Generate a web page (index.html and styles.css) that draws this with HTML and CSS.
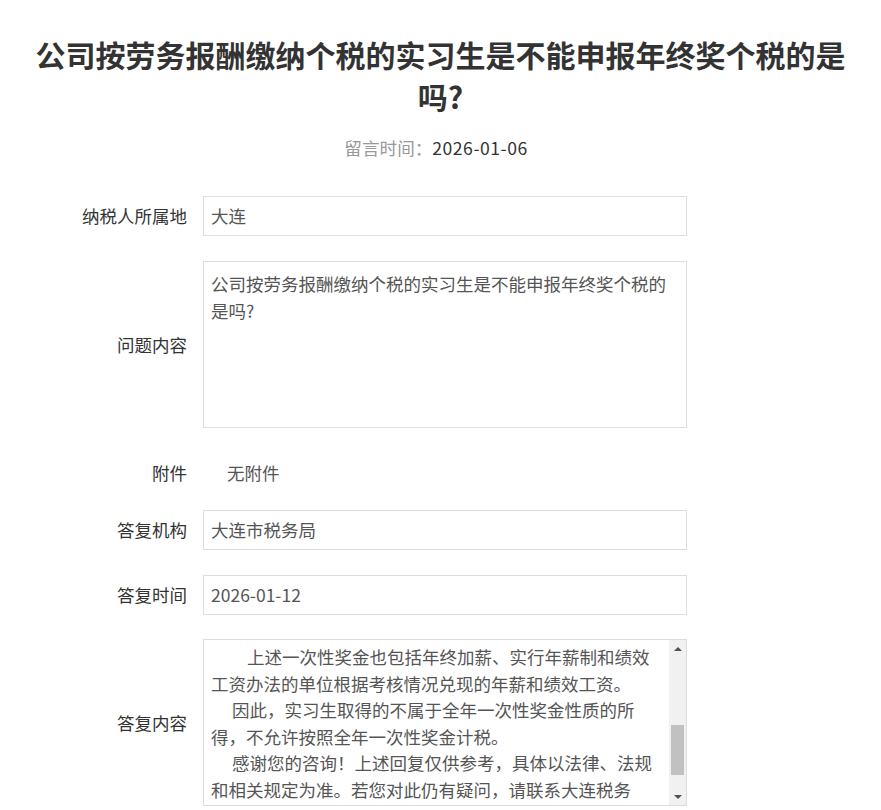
FILE: index.html
```html
<!DOCTYPE html>
<html lang="zh-CN">
<head>
<meta charset="utf-8">
<title>留言详情</title>
<link rel="stylesheet" href="styles.css">
</head>
<body>
<div class="page">
  <h1 class="title">公司按劳务报酬缴纳个税的实习生是不能申报年终奖个税的是吗?</h1>
  <div class="meta"><span class="meta-label">留言时间：</span><span class="meta-value">2026-01-06</span></div>

  <div class="form">
    <div class="row row-gap">
      <div class="label">纳税人所属地</div>
      <div class="field">大连</div>
    </div>
    <div class="row row-gap">
      <div class="label label-mid">问题内容</div>
      <div class="area">公司按劳务报酬缴纳个税的实习生是不能申报年终奖个税的是吗?</div>
    </div>
    <div class="row row-attach">
      <div class="label">附件</div>
      <div class="plain">无附件</div>
    </div>
    <div class="row row-gap">
      <div class="label">答复机构</div>
      <div class="field">大连市税务局</div>
    </div>
    <div class="row row-gap2">
      <div class="label">答复时间</div>
      <div class="field">2026-01-12</div>
    </div>
    <div class="row">
      <div class="label label-mid">答复内容</div>
      <div class="scrollbox">
        <div class="scroll-content">
          <p class="line indent2">上述一次性奖金也包括年终加薪、实行年薪制和绩效</p>
          <p class="line">工资办法的单位根据考核情况兑现的年薪和绩效工资。</p>
          <p class="line indent1">因此，实习生取得的不属于全年一次性奖金性质的所</p>
          <p class="line">得，不允许按照全年一次性奖金计税。</p>
          <p class="line indent1">感谢您的咨询！上述回复仅供参考，具体以法律、法规</p>
          <p class="line">和相关规定为准。若您对此仍有疑问，请联系大连税务</p>
        </div>
        <div class="scrollbar">
          <div class="arrow arrow-up"></div>
          <div class="track"><div class="thumb"></div></div>
          <div class="arrow arrow-down"></div>
        </div>
      </div>
    </div>
  </div>
</div>
</body>
</html>
```

FILE: styles.css
```css
html, body {
  margin: 0;
  padding: 0;
  background: #ffffff;
}
body {
  font-family: "Noto Sans CJK SC", "Noto Sans", "Liberation Sans", sans-serif;
  color: #333333;
}
.page {
  width: 881px;
}
.title {
  margin: 0;
  padding: 33px 16px 0;
  font-size: 30px;
  line-height: 42px;
  font-weight: 700;
  text-align: center;
  color: #333333;
}
.meta {
  margin-top: 16px;
  padding-right: 9px;
  line-height: 30px;
  font-size: 17.6px;
  text-align: center;
}
.meta-label {
  color: #999999;
}
.meta-value {
  color: #333333;
  letter-spacing: 0.5px;
}
.form {
  margin-top: 33px;
}
.row {
  display: grid;
  grid-template-columns: 187px 484px;
  column-gap: 16px;
  font-size: 17.5px;
}
.row-gap {
  margin-bottom: 25px;
}
.row-gap2 {
  margin-bottom: 24px;
}
.row-attach {
  margin-bottom: 17px;
}
.label {
  text-align: right;
  line-height: 40px;
  color: #333333;
}
.label-mid {
  align-self: center;
}
.field {
  box-sizing: border-box;
  height: 40px;
  border: 1px solid #dddddd;
  padding: 0 7px;
  line-height: 38px;
  color: #555555;
}
.plain {
  line-height: 40px;
  padding-left: 24px;
  color: #555555;
}
.area {
  box-sizing: border-box;
  height: 167px;
  border: 1px solid #dddddd;
  padding: 8px 12px 8px 7px;
  line-height: 27px;
  color: #555555;
}
.scrollbox {
  box-sizing: border-box;
  height: 167px;
  border: 1px solid #dddddd;
  display: flex;
  overflow: hidden;
}
.scroll-content {
  flex: 1;
  padding: 4px 0 0 7px;
  overflow: hidden;
  color: #555555;
}
.line {
  margin: 0;
  white-space: nowrap;
  line-height: 26.6px;
}
.indent2 {
  padding-left: 36px;
}
.indent1 {
  padding-left: 21px;
}
.scrollbar {
  width: 17px;
  flex: none;
  background: #f1f1f1;
  display: flex;
  flex-direction: column;
}
.arrow {
  height: 17px;
  flex: none;
  display: flex;
  align-items: center;
  justify-content: center;
}
.arrow::before {
  content: "";
  width: 0;
  height: 0;
  border-left: 4px solid transparent;
  border-right: 4px solid transparent;
}
.arrow-up::before {
  border-bottom: 4px solid #505050;
}
.arrow-down::before {
  border-top: 4px solid #505050;
}
.track {
  flex: 1;
  display: flex;
  flex-direction: column;
  padding: 0 2px;
}
.thumb {
  margin-top: 68px;
  height: 50px;
  background: #c1c1c1;
}
```
